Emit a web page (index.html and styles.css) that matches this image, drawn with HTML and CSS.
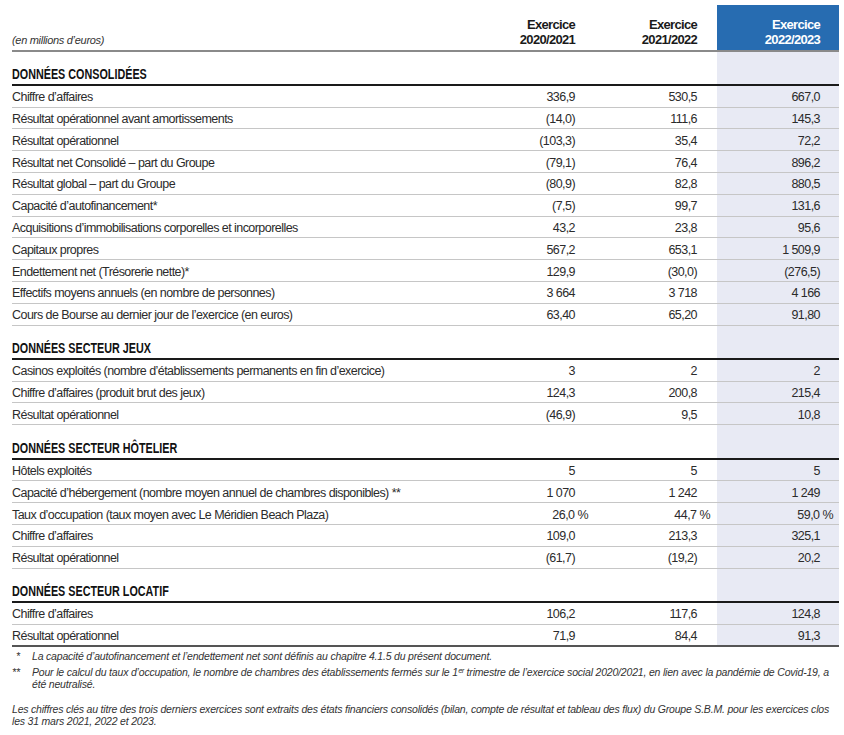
FILE: index.html
```html
<!DOCTYPE html>
<html lang="fr">
<head>
<meta charset="utf-8">
<title>Chiffres clés</title>
<link rel="stylesheet" href="styles.css">
</head>
<body>
<div class="page">
  <table class="kf">
    <colgroup>
      <col class="c-label">
      <col class="c-num">
      <col class="c-num">
      <col class="c-num">
    </colgroup>
    <thead>
      <tr>
        <th class="unit">(en millions d’euros)</th>
        <th class="yr">Exercice<br>2020/2021</th>
        <th class="yr">Exercice<br>2021/2022</th>
        <th class="yr cur">Exercice<br>2022/2023</th>
      </tr>
    </thead>
    <tbody>
      <tr class="sec"><td><span class="ttl">DONNÉES CONSOLIDÉES</span></td><td></td><td></td><td class="cur"></td></tr>
      <tr><td>Chiffre d’affaires</td><td>336,9</td><td>530,5</td><td class="cur">667,0</td></tr>
      <tr><td>Résultat opérationnel avant amortissements</td><td>(14,0)</td><td>111,6</td><td class="cur">145,3</td></tr>
      <tr><td>Résultat opérationnel</td><td>(103,3)</td><td>35,4</td><td class="cur">72,2</td></tr>
      <tr><td>Résultat net Consolidé – part du Groupe</td><td>(79,1)</td><td>76,4</td><td class="cur">896,2</td></tr>
      <tr><td>Résultat global – part du Groupe</td><td>(80,9)</td><td>82,8</td><td class="cur">880,5</td></tr>
      <tr><td>Capacité d’autofinancement*</td><td>(7,5)</td><td>99,7</td><td class="cur">131,6</td></tr>
      <tr><td>Acquisitions d’immobilisations corporelles et incorporelles</td><td>43,2</td><td>23,8</td><td class="cur">95,6</td></tr>
      <tr><td>Capitaux propres</td><td>567,2</td><td>653,1</td><td class="cur">1 509,9</td></tr>
      <tr><td>Endettement net (Trésorerie nette)*</td><td>129,9</td><td>(30,0)</td><td class="cur">(276,5)</td></tr>
      <tr><td>Effectifs moyens annuels (en nombre de personnes)</td><td>3 664</td><td>3 718</td><td class="cur">4 166</td></tr>
      <tr><td>Cours de Bourse au dernier jour de l’exercice (en euros)</td><td>63,40</td><td>65,20</td><td class="cur">91,80</td></tr>

      <tr class="sec"><td><span class="ttl">DONNÉES SECTEUR JEUX</span></td><td></td><td></td><td class="cur"></td></tr>
      <tr><td>Casinos exploités (nombre d’établissements permanents en fin d’exercice)</td><td>3</td><td>2</td><td class="cur">2</td></tr>
      <tr><td>Chiffre d’affaires (produit brut des jeux)</td><td>124,3</td><td>200,8</td><td class="cur">215,4</td></tr>
      <tr><td>Résultat opérationnel</td><td>(46,9)</td><td>9,5</td><td class="cur">10,8</td></tr>

      <tr class="sec"><td><span class="ttl">DONNÉES SECTEUR HÔTELIER</span></td><td></td><td></td><td class="cur"></td></tr>
      <tr><td>Hôtels exploités</td><td>5</td><td>5</td><td class="cur">5</td></tr>
      <tr><td>Capacité d’hébergement (nombre moyen annuel de chambres disponibles) **</td><td>1 070</td><td>1 242</td><td class="cur">1 249</td></tr>
      <tr><td>Taux d’occupation (taux moyen avec Le Méridien Beach Plaza)</td><td>26,0<span class="pc"> %</span></td><td>44,7<span class="pc"> %</span></td><td class="cur">59,0<span class="pc"> %</span></td></tr>
      <tr><td>Chiffre d’affaires</td><td>109,0</td><td>213,3</td><td class="cur">325,1</td></tr>
      <tr><td>Résultat opérationnel</td><td>(61,7)</td><td>(19,2)</td><td class="cur">20,2</td></tr>

      <tr class="sec"><td><span class="ttl">DONNÉES SECTEUR LOCATIF</span></td><td></td><td></td><td class="cur"></td></tr>
      <tr><td>Chiffre d’affaires</td><td>106,2</td><td>117,6</td><td class="cur">124,8</td></tr>
      <tr class="last"><td>Résultat opérationnel</td><td>71,9</td><td>84,4</td><td class="cur">91,3</td></tr>
    </tbody>
  </table>

  <div class="notes">
    <div class="note"><span class="mark">*</span><span class="ntext">La capacité d’autofinancement et l’endettement net sont définis au chapitre 4.1.5 du présent document.</span></div>
    <div class="note"><span class="mark m2">**</span><span class="ntext">Pour le calcul du taux d’occupation, le nombre de chambres des établissements fermés sur le 1ᵉʳ trimestre de l’exercice social 2020/2021, en lien avec la pandémie de Covid-19, a été neutralisé.</span></div>
  </div>
  <p class="source">Les chiffres clés au titre des trois derniers exercices sont extraits des états financiers consolidés (bilan, compte de résultat et tableau des flux) du Groupe S.B.M. pour les exercices clos les 31 mars 2021, 2022 et 2023.</p>
</div>
</body>
</html>
```

FILE: styles.css
```css
html, body {
  margin: 0;
  padding: 0;
  background: #ffffff;
}

body {
  font-family: "Liberation Sans", Arial, sans-serif;
  color: #2b2b2b;
}

.page {
  padding: 5px 0 0 12px;
  width: 827px;
}

.kf {
  width: 827px;
  border-collapse: collapse;
  table-layout: fixed;
  font-size: 12.5px;
  letter-spacing: -0.55px;
}

.c-label { width: 461px; }
.c-num { width: 122px; }

.kf th,
.kf td {
  padding: 0;
  white-space: nowrap;
}

.kf thead th {
  height: 46px;
  vertical-align: bottom;
  border-bottom: 2px solid #8a8a8a;
  padding-bottom: 3px;
  box-sizing: border-box;
}

.kf th.unit {
  text-align: left;
  font-weight: normal;
  font-style: italic;
  font-size: 11px;
  letter-spacing: -0.3px;
  color: #333;
  padding-bottom: 4px;
}

.kf th.yr {
  text-align: right;
  padding-right: 20px;
  font-weight: bold;
  font-size: 13px;
  line-height: 15px;
  letter-spacing: -0.7px;
  color: #1a1a1a;
}

.kf th.yr.cur {
  background: #276cb1;
  color: #ffffff;
  padding-right: 19px;
}

.kf td.cur {
  background: #e8eaf4;
}

.kf tbody td {
  height: 18.8px;
  line-height: 14px;
  border-bottom: 1px solid #c6c6c6;
  text-align: right;
  padding-right: 20px;
  padding-top: 2px;
  vertical-align: middle;
}

.kf tbody td.cur {
  padding-right: 19px;
}

.kf tbody td:first-child {
  text-align: left;
  padding-right: 0;
}

.kf tr.sec td {
  height: 33.8px;
  vertical-align: bottom;
  border-bottom: 2px solid #1a1a1a;
  padding-top: 0;
  padding-bottom: 2px;
  box-sizing: border-box;
}

.ttl {
  display: inline-block;
  font-weight: bold;
  font-size: 14px;
  letter-spacing: 0;
  color: #111;
  transform: scaleX(0.77);
  transform-origin: left center;
}

.kf tr.last td {
  border-bottom: 2px solid #555;
}

.pc {
  margin-right: -13px;
}

.notes {
  margin-top: 3px;
  font-size: 10.5px;
  font-style: italic;
  line-height: 12px;
  letter-spacing: -0.19px;
  color: #333;
}

.note {
  display: flex;
  margin-bottom: 4px;
}

.mark {
  flex: 0 0 20px;
  padding-left: 4px;
  box-sizing: border-box;
}

.mark.m2 {
  padding-left: 0;
}

.ntext {
  flex: 1;
}

.source {
  margin: 13px 0 0 0;
  font-size: 10.5px;
  font-style: italic;
  line-height: 12px;
  letter-spacing: -0.2px;
  color: #333;
}
```
